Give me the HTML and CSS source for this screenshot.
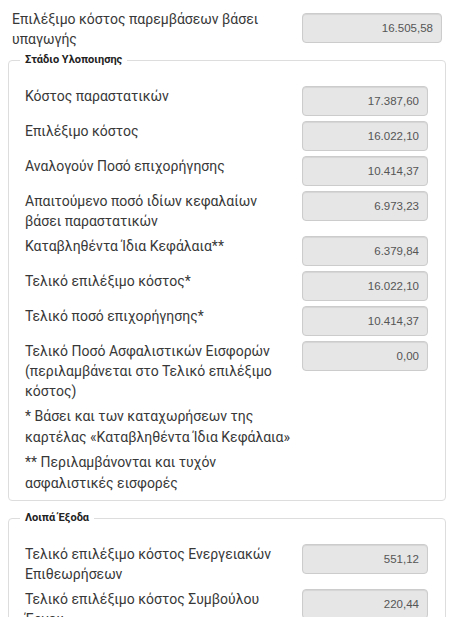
FILE: index.html
```html
<!DOCTYPE html>
<html lang="el">

<head>
    <meta charset="UTF-8">
    <meta name="viewport" content="width=device-width, initial-scale=1.0">
    <title>Κόστος</title>
    <link rel="stylesheet" href="styles.css">
</head>

<body>
    <div class="page">
        <!-- συνολικό επιλέξιμο -->
        <div class="row row_top">
            <label class="row_label">Επιλέξιμο κόστος παρεμβάσεων βάσει υπαγωγής</label>
            <input class="row_input" type="text" value="16.505,58" disabled>
        </div>

        <fieldset class="box">
            <legend class="box_title">Στάδιο Υλοποιησης</legend>
            <div class="row">
                <label class="row_label">Κόστος παραστατικών</label>
                <input class="row_input" type="text" value="17.387,60" disabled>
            </div>
            <div class="row">
                <label class="row_label">Επιλέξιμο κόστος</label>
                <input class="row_input" type="text" value="16.022,10" disabled>
            </div>
            <div class="row">
                <label class="row_label">Αναλογούν Ποσό επιχορήγησης</label>
                <input class="row_input" type="text" value="10.414,37" disabled>
            </div>
            <div class="row">
                <label class="row_label">Απαιτούμενο ποσό ιδίων κεφαλαίων βάσει παραστατικών</label>
                <input class="row_input" type="text" value="6.973,23" disabled>
            </div>
            <div class="row">
                <label class="row_label">Καταβληθέντα Ίδια Κεφάλαια**</label>
                <input class="row_input" type="text" value="6.379,84" disabled>
            </div>
            <div class="row">
                <label class="row_label">Τελικό επιλέξιμο κόστος*</label>
                <input class="row_input" type="text" value="16.022,10" disabled>
            </div>
            <div class="row">
                <label class="row_label">Τελικό ποσό επιχορήγησης*</label>
                <input class="row_input" type="text" value="10.414,37" disabled>
            </div>
            <div class="row">
                <label class="row_label">Τελικό Ποσό Ασφαλιστικών Εισφορών (περιλαμβάνεται στο Τελικό επιλέξιμο κόστος)</label>
                <input class="row_input" type="text" value="0,00" disabled>
            </div>
            <p class="note">* Βάσει και των καταχωρήσεων της καρτέλας «Καταβληθέντα Ίδια Κεφάλαια»</p>
            <p class="note">** Περιλαμβάνονται και τυχόν ασφαλιστικές εισφορές</p>
        </fieldset>

        <fieldset class="box">
            <legend class="box_title">Λοιπά Έξοδα</legend>
            <div class="row">
                <label class="row_label">Τελικό επιλέξιμο κόστος Ενεργειακών Επιθεωρήσεων</label>
                <input class="row_input" type="text" value="551,12" disabled>
            </div>
            <div class="row">
                <label class="row_label">Τελικό επιλέξιμο κόστος Συμβούλου Έργου</label>
                <input class="row_input" type="text" value="220,44" disabled>
            </div>
        </fieldset>
    </div>
</body>

</html>
```

FILE: styles.css
```css
* {
    margin: 0px;
    padding: 0px;
    box-sizing: border-box;
}

body {
    font-family: Roboto, "Noto Sans", sans-serif;
    font-size: 14px;
    line-height: 20px;
    color: #383838;
    background: #fff;
}

.page {
    padding: 9px 4px 0 8px;
}
/*
 * 一行: 标签 + 输入框
 */

.row {
    display: grid;
    grid-template-columns: 1fr 126px;
    margin-bottom: 5px;
}

.row_label {
    padding-right: 10px;
}

.row_input {
    height: 30px;
    padding: 0 8px;
    border: 1px solid #ccc;
    border-radius: 4px;
    background-color: #e6e6e6;
    box-shadow: inset 0 1px 1px rgba(0, 0, 0, .075);
    font-family: "Liberation Sans", Arial, sans-serif;
    font-size: 11.5px;
    color: #555;
    text-align: right;
    width: 100%;
}

.row_top {
    grid-template-columns: 1fr 140px;
    margin: 0 4px 4px 4px;
}

.row_top .row_input {
    margin-top: 4px;
}
/*
 * fieldset 分组
 */

.box {
    border: 1px solid #ddd;
    border-radius: 4px;
    padding: 19px 17px 6px 16px;
    margin-bottom: 10px;
}

.box_title {
    margin-left: -5px;
    padding: 0 5px;
    font-size: 11px;
    font-weight: bold;
    line-height: 14px;
    color: #222;
}

.note {
    line-height: 21px;
    margin-top: 3px;
    padding-right: 10px;
    width: calc(100% - 126px);
}

.note + .note {
    margin-top: 4px;
}
```
